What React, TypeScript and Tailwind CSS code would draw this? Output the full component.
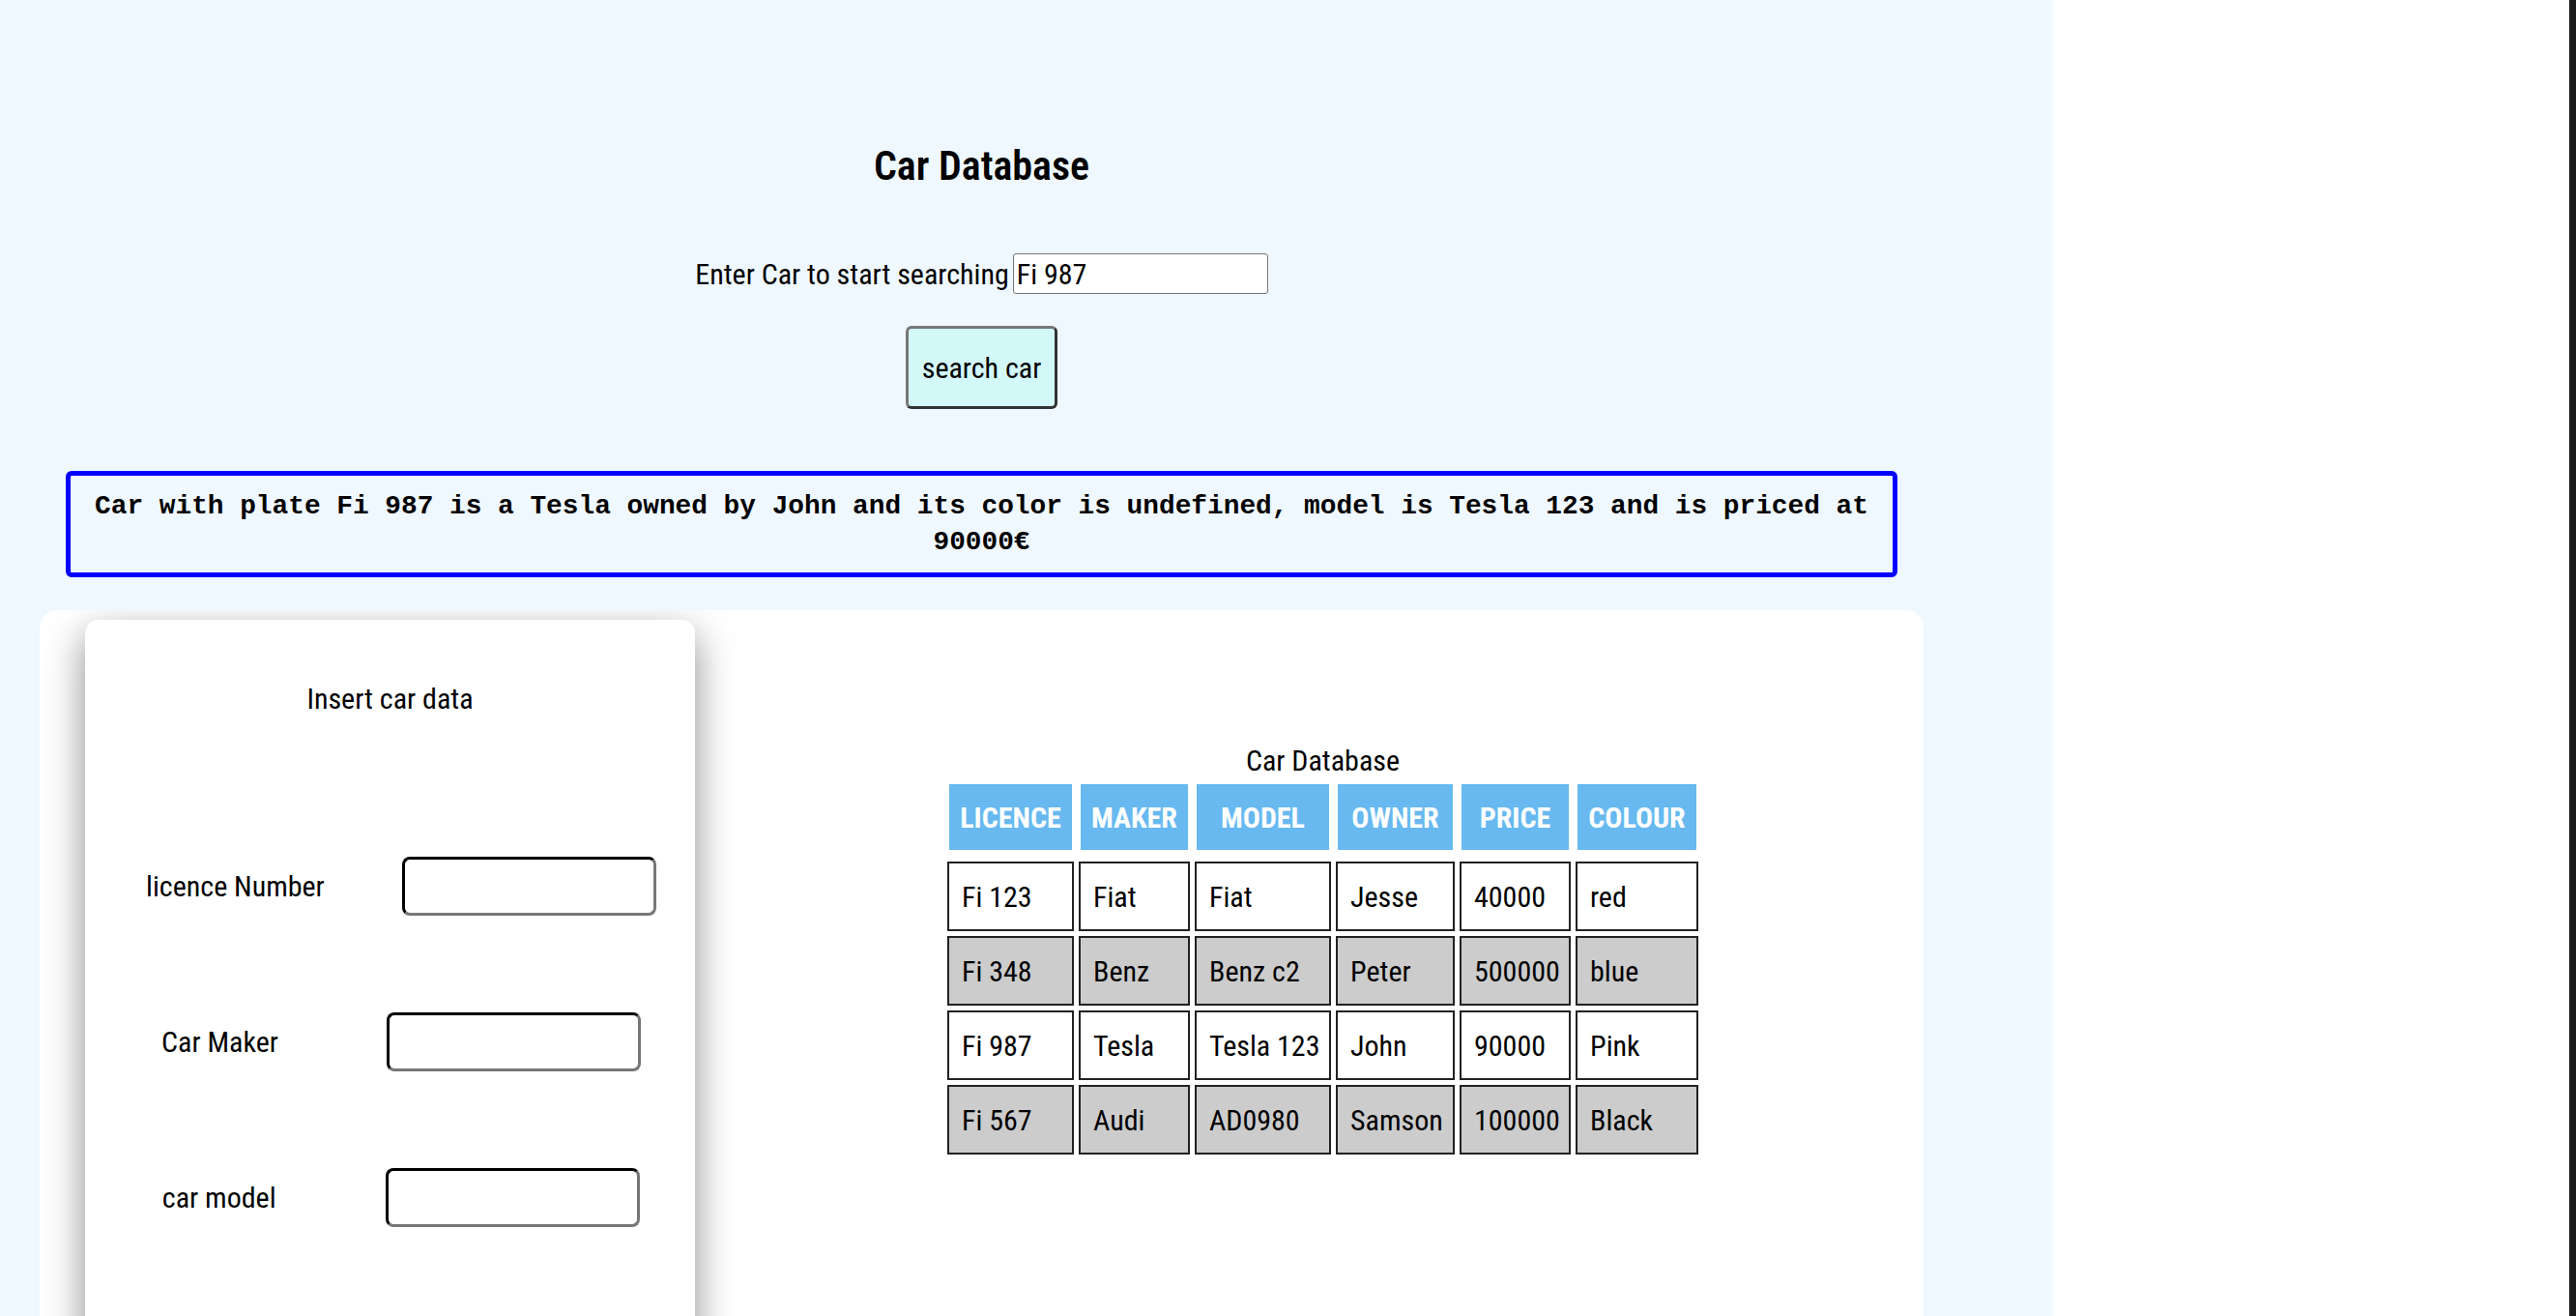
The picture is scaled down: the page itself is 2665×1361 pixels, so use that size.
import React from "react";

const cars = [
  { licence: "Fi 123", maker: "Fiat", model: "Fiat", owner: "Jesse", price: "40000", colour: "red" },
  { licence: "Fi 348", maker: "Benz", model: "Benz c2", owner: "Peter", price: "500000", colour: "blue" },
  { licence: "Fi 987", maker: "Tesla", model: "Tesla 123", owner: "John", price: "90000", colour: "Pink" },
  { licence: "Fi 567", maker: "Audi", model: "AD0980", owner: "Samson", price: "100000", colour: "Black" },
];

const columns = [
  { label: "LICENCE", width: "w-[131px]" },
  { label: "MAKER", width: "w-[115px]" },
  { label: "MODEL", width: "w-[141px]" },
  { label: "OWNER", width: "w-[123px]" },
  { label: "PRICE", width: "w-[115px]" },
  { label: "COLOUR", width: "w-[127px]" },
];

const fields = ["licence Number", "Car Maker", "car model"];

function InsertCard() {
  return (
    <div className="ml-[47px] mt-[10px] w-[631px] shrink-0 self-start rounded-[14px] bg-white pt-[67px] pb-[220px] shadow-[0_15px_40px_rgba(0,0,0,0.45)]">
      <h2 className="text-center text-[30px] leading-none">Insert car data</h2>
      <div className="mt-[148px] flex flex-col gap-[100px]">
        {fields.map((f) => (
          <div key={f} className="ml-[23px] flex w-[608px] items-center justify-around">
            <label className="text-[30px] leading-none">{f}</label>
            <input
              className="h-[61px] w-[263px] rounded-lg border-[3px] border-t-black border-l-black border-r-[#777] border-b-[#777] bg-white px-2 text-[30px] outline-none"
              defaultValue=""
            />
          </div>
        ))}
      </div>
    </div>
  );
}

function CarTable() {
  return (
    <div className="ml-[28px] flex flex-1 justify-center pt-[141px]">
      <table className="w-[787px] table-fixed border-separate border-spacing-[5px] self-start">
        <caption className="pb-[2px] text-[30px] leading-none">Car Database</caption>
        <thead>
          <tr>
            {columns.map((c) => (
              <th
                key={c.label}
                className={`${c.width} h-[77px] border-x-2 border-t-2 border-b-[7px] border-white bg-[#67b9f0] text-center text-[30px] font-bold text-white`}
              >
                {c.label}
              </th>
            ))}
          </tr>
        </thead>
        <tbody>
          {cars.map((car, i) => (
            <tr key={car.licence} className={i % 2 === 1 ? "bg-[#cccccc]" : "bg-white"}>
              {[car.licence, car.maker, car.model, car.owner, car.price, car.colour].map((v, j) => (
                <td key={j} className="h-[72px] border-2 border-[#222] px-[13px] text-left text-[30px] whitespace-nowrap">
                  {v}
                </td>
              ))}
            </tr>
          ))}
        </tbody>
      </table>
    </div>
  );
}

export default function App() {
  return (
    <div className="flex h-[1361px] overflow-hidden bg-white font-['Roboto_Condensed',Roboto,sans-serif] text-black">
      <div className="w-[2124px] shrink-0 bg-[#f0f8ff]">
        <div className="flex w-[2031px] flex-col items-center">
          <h1 className="mt-[151px] text-[42px] font-semibold leading-none">Car Database</h1>

          <div className="mt-[69px] flex h-[42px] items-center text-[30px]">
            <label>Enter Car to start searching</label>
            <input
              className="ml-[4px] h-[42px] w-[264px] rounded-[3px] border border-[#767676] bg-white px-[3px] text-[30px] outline-none"
              defaultValue="Fi 987"
            />
          </div>

          <button className="mt-[33px] h-[86px] w-[157px] rounded-md border-[3px] border-t-[#777] border-l-[#777] border-r-[#333] border-b-[#333] bg-[#d3f8f8] text-[30px]">
            search car
          </button>

          <div className="mt-[64px] w-[1895px] rounded-md border-[5px] border-[#0000ff] px-[12px] py-[13px] text-center font-['Liberation_Mono',monospace] text-[27.8px] font-bold leading-[37px]">
            Car with plate Fi 987 is a Tesla owned by John and its color is undefined, model is Tesla 123 and is priced at 90000€
          </div>

          <div className="mt-[34px] flex h-[900px] w-[1949px] overflow-hidden rounded-[18px] bg-white">
            <InsertCard />
            <CarTable />
          </div>
        </div>
      </div>
      <div className="flex-1" />
      <div className="w-[7px] shrink-0 bg-[#1b1b1b]" />
    </div>
  );
}
